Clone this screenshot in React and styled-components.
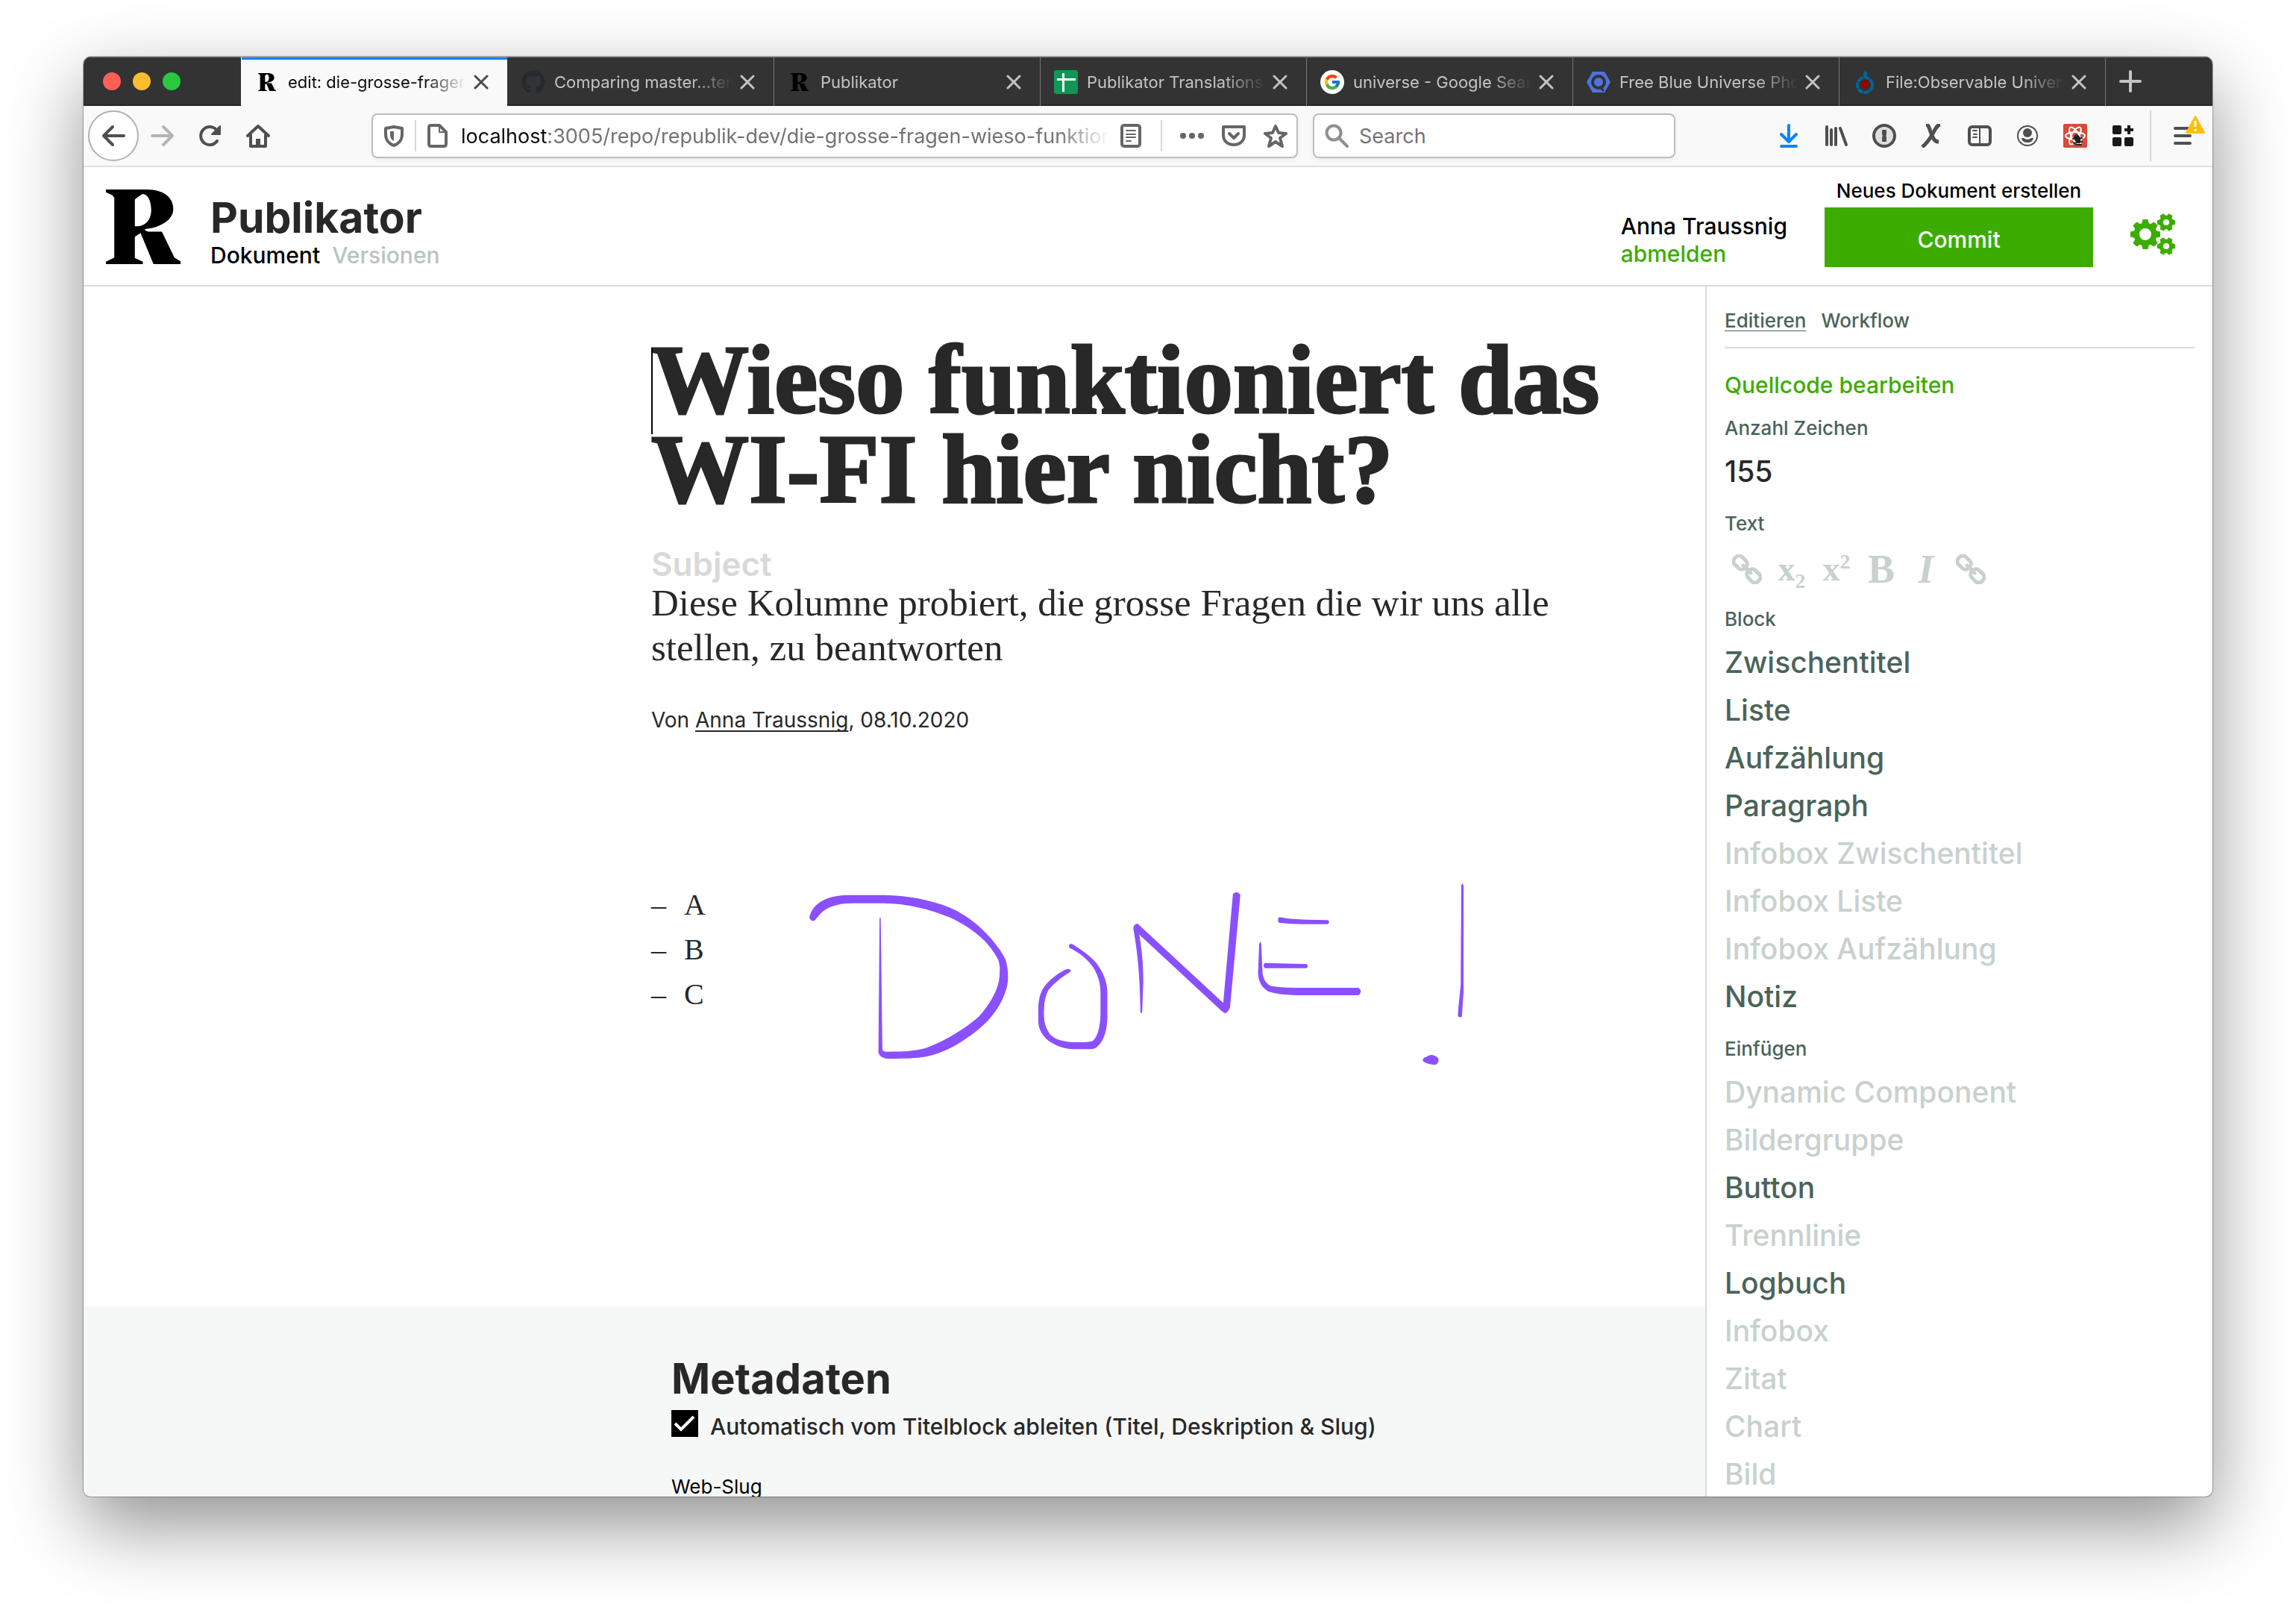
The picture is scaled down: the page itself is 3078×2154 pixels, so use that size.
import React, { useState } from "react";
import styled, { createGlobalStyle, css } from "styled-components";
import { FaGithub } from "react-icons/fa";
import { FcGoogle } from "react-icons/fc";

const sans = `Inter, "Liberation Sans", sans-serif`;
const serif = `"Liberation Serif", serif`;

const color = {
  green: "#3cad00",
  text: "#282828",
  muted: "#4b6359",
  disabled: "#c8d1cd",
  line: "#dadada",
  secondary: "#f6f8f7",
  chromeIcon: "#4f4f50",
  urlIcon: "#666667",
  ink: "#8a50ff",
};

const GlobalStyle = createGlobalStyle`
  *, *::before, *::after { box-sizing: border-box; }
  body { margin: 0; background: #fff; font-family: ${sans}; color: ${color.text}; }
  button { font: inherit; color: inherit; border: 0; padding: 0; background: none; }
  a { color: inherit; text-decoration: none; }
  h1, h2, p, ul { margin: 0; padding: 0; font-weight: inherit; }
  svg { display: block; flex: none; }
`;

const Desktop = styled.div`
  display: flex;
  height: 100vh;
  padding: 76px 112px 148px;
`;

const Window = styled.div`
  flex: 1;
  min-width: 0;
  display: flex;
  flex-direction: column;
  overflow: hidden;
  border-radius: 10px;
  background: #fff;
  box-shadow: 0 0 0 1px rgba(0, 0, 0, 0.28), 0 38px 100px rgba(0, 0, 0, 0.44);
`;

/* ---------- browser chrome ---------- */

const TabStrip = styled.div`
  flex: none;
  display: flex;
  height: 66px;
  background: #333;
  box-shadow: inset 0 1px #7c7c7c, inset 0 -2px #262626;
`;

const TrafficLights = styled.div`
  flex: none;
  width: 211px;
  padding-left: 26px;
  display: flex;
  align-items: center;
  gap: 16px;
`;

const Light = styled.button`
  width: 24px;
  height: 24px;
  border-radius: 50%;
  background: ${(p) => p.$tone};
`;

const Tab = styled.div`
  flex: 0 1 357px;
  min-width: 0;
  display: flex;
  align-items: center;
  padding: 2px 25px 0 18px;
  font-size: 22px;
  line-height: 32px;
  color: #c4c4c4;
  border-left: 1px solid ${(p) => (p.$divided ? "#777" : "transparent")};
  ${(p) =>
    p.$active &&
    css`
      color: #0c0c0d;
      background: #f9f9fa;
      border-left-color: #f9f9fa;
      box-shadow: inset 0 1px #9a9a9a, inset 0 4px #0a84ff;
    `}
`;

const TabTitle = styled.span`
  flex: 1;
  min-width: 0;
  margin: 0 10px 0 12px;
  overflow: hidden;
  white-space: nowrap;
  mask-image: linear-gradient(to left, transparent, #000 56px);
`;

const CloseButton = styled.button`
  color: ${(p) => (p.$active ? "#4a4a4a" : "#c4c4c4")};
`;

const NewTab = styled.button`
  width: 66px;
  display: grid;
  place-items: center;
  color: #c4c4c4;
  border-left: 1px solid #777;
`;

const Toolbar = styled.div`
  flex: none;
  display: flex;
  align-items: center;
  height: 82px;
  padding-left: 6px;
  background: #f9f9fa;
  border-bottom: 2px solid #e0e0e1;
`;

const ToolButton = styled.button`
  position: relative;
  flex: none;
  display: grid;
  place-items: center;
  width: 64px;
  height: 68px;
  color: ${(p) => p.$tone || color.chromeIcon};
`;

const BackButton = styled(ToolButton)`
  width: 68px;
  border: 2px solid #b1b1b1;
  border-radius: 50%;
  background: #fff;
`;

const Spacer = styled.div`
  flex: 0 1 120px;
`;

const Field = styled.div`
  display: flex;
  align-items: center;
  height: 60px;
  border: 2px solid #bdbdbd;
  border-radius: 8px;
  background: #fff;
  color: ${color.urlIcon};
  box-shadow: 0 2px 6px rgba(0, 0, 0, 0.06);
`;

const AddressBar = styled(Field)`
  flex: 1;
  min-width: 0;
  padding: 0 12px;
`;

const Separator = styled.span`
  flex: none;
  width: 2px;
  height: ${(p) => (p.$tall ? 68 : 42)}px;
  margin: 0 ${(p) => p.$gap}px;
  background: #d7d7d8;
`;

const Address = styled.div`
  flex: 1;
  min-width: 0;
  margin: 2px 12px 0 16px;
  overflow: hidden;
  white-space: nowrap;
  font-size: 27px;
  line-height: 40px;
  color: #737373;
  mask-image: linear-gradient(to left, transparent, #000 70px);

  b {
    font-weight: 400;
    color: #0c0c0d;
  }
`;

const PageActions = styled.div`
  display: flex;
  gap: 24px;
`;

const SearchBar = styled(Field)`
  flex: none;
  width: 486px;
  margin-left: 20px;
  padding-left: 14px;
  gap: 14px;

  input {
    flex: 1;
    min-width: 0;
    border: 0;
    outline: 0;
    padding: 2px 0 0;
    background: none;
    font: 27px/40px ${sans};
    color: #0c0c0d;
  }
  input::placeholder {
    color: #737373;
    opacity: 1;
  }
`;

const MenuButton = styled(ToolButton)`
  width: 78px;
`;

const WarningBadge = styled.svg`
  position: absolute;
  left: 42px;
  top: 7px;
`;

/* ---------- app header ---------- */

const Header = styled.header`
  flex: none;
  display: flex;
  align-items: flex-start;
  height: 160px;
  padding: 0 50px 0 30px;
  border-bottom: 2px solid ${color.line};
`;

const Logo = styled.a`
  margin: 30px 40px 0 0;
  color: #000;
`;

const Brand = styled.div`
  flex: 1;
  padding-top: 36px;
`;

const BrandName = styled.p`
  font-size: 57px;
  font-weight: 700;
  line-height: 64px;
`;

const BrandNav = styled.nav`
  display: flex;
  gap: 16px;
  font-size: 30px;
  font-weight: 500;
  line-height: 36px;

  a {
    color: #b8c4c0;
  }
  a[aria-current] {
    color: #000;
  }
`;

const HeaderTools = styled.div`
  display: flex;
  align-items: flex-start;
  gap: 50px;
`;

const User = styled.div`
  padding-top: 61px;
  font-size: 30px;
  font-weight: 500;
  line-height: 37px;
  color: #000;

  a {
    display: block;
    color: ${color.green};
  }
`;

const CommitBox = styled.div`
  display: flex;
  flex-direction: column;
  gap: 6px;
  width: 360px;
  padding-top: 16px;
  font-size: 26px;
  font-weight: 500;
  line-height: 32px;
  text-align: center;
  color: #000;
`;

const CommitButton = styled.button`
  height: 80px;
  padding-top: 6px;
  background: ${color.green};
  color: #fff;
  font-size: 30px;
  font-weight: 500;
`;

const SettingsButton = styled.button`
  padding-top: 62px;
  color: ${color.green};
`;

/* ---------- editor ---------- */

const Body = styled.div`
  flex: 1;
  min-height: 0;
  display: flex;
`;

const Editor = styled.main`
  position: relative;
  flex: 1;
  min-width: 0;
  overflow: hidden;
`;

const Article = styled.article`
  padding: 65px 0 388px 35%;
`;

const Title = styled.h1`
  position: relative;
  max-width: 1340px;
  font: 700 131px/120px ${serif};
  -webkit-text-stroke: 3px ${color.text};
`;

const Caret = styled.span`
  position: absolute;
  left: 0;
  top: 17px;
  width: 2px;
  height: 116px;
  background: #000;
`;

const Subject = styled.p`
  margin-top: 45px;
  font-size: 44px;
  font-weight: 600;
  line-height: 44px;
  color: #d9d9d9;
`;

const Lead = styled.p`
  max-width: 1300px;
  font: 51px/60px ${serif};
`;

const Byline = styled.p`
  margin-top: 47px;
  font-size: 28px;
  line-height: 40px;

  a {
    text-decoration: underline;
    text-decoration-skip-ink: none;
    text-decoration-thickness: 2px;
    text-underline-offset: 4px;
  }
`;

const DashList = styled.ul`
  margin-top: 198px;
  list-style: none;
  font: 40px/60px ${serif};

  li {
    padding-left: 44px;
  }
  li::before {
    content: "–";
    display: inline-block;
    width: 44px;
    margin-left: -44px;
  }
`;

const Handwriting = styled.svg`
  position: absolute;
  left: 748px;
  top: 766px;
  fill: ${color.ink};
`;

const Metadata = styled.section`
  padding: 63px 0 60px 788px;
  background: ${color.secondary};

  h2 {
    font-size: 56px;
    font-weight: 700;
    line-height: 68px;
  }
`;

const CheckRow = styled.label`
  display: grid;
  grid-template-columns: 36px 1fr;
  column-gap: 16px;
  margin-top: 8px;
  font-size: 30px;
  font-weight: 500;
  line-height: 36px;

  input {
    grid-area: 1 / 1;
    appearance: none;
    width: 36px;
    height: 36px;
    margin: 0;
    background: #000;
  }
  svg {
    grid-area: 1 / 1;
    pointer-events: none;
    z-index: 1;
  }
  span {
    padding-top: 4px;
  }
`;

const SlugField = styled.div`
  margin-top: 47px;
  font-size: 26px;
  line-height: 32px;
  color: #000;

  label,
  input {
    display: block;
  }
  input {
    width: 1200px;
    max-width: 100%;
    height: 80px;
    border: 0;
    border-bottom: 2px solid ${color.line};
    background: none;
  }
`;

/* ---------- sidebar ---------- */

const Sidebar = styled.aside`
  flex: none;
  width: 680px;
  padding: 28px 24px 0;
  overflow: hidden;
  border-left: 2px solid ${color.line};
  color: ${color.muted};
`;

const SidebarTabs = styled.nav`
  display: flex;
  gap: 20px;
  padding-bottom: 17px;
  border-bottom: 2px solid ${color.line};
  font-size: 26px;
  font-weight: 500;
  line-height: 36px;

  a[aria-current] {
    text-decoration: underline;
    text-decoration-thickness: 1px;
    text-underline-offset: 4px;
  }
`;

const SourceLink = styled.a`
  display: block;
  margin-top: 31px;
  padding-bottom: 2px;
  font-size: 30px;
  font-weight: 500;
  line-height: 36px;
  color: ${color.green};
`;

const Group = styled.section`
  margin-top: 22px;
`;

const GroupLabel = styled.h2`
  margin-bottom: 10px;
  font-size: 26px;
  font-weight: 500;
  line-height: 32px;
`;

const Count = styled.p`
  font-size: 39px;
  font-weight: 500;
  line-height: 64px;
  color: ${color.text};
`;

const MarkRow = styled.div`
  display: flex;
  height: 64px;
  padding-top: 6px;
`;

const MarkButton = styled.button`
  width: 60px;
  display: grid;
  place-items: center;
  font: 700 ${(p) => p.$size || 46}px/58px ${serif};
  font-style: ${(p) => (p.$italic ? "italic" : "normal")};
  color: ${color.disabled};

  sub,
  sup {
    font-size: 28px;
    line-height: 0;
  }
`;

const BlockButton = styled.button`
  display: block;
  font-size: 39px;
  font-weight: 500;
  line-height: 64px;
  color: ${color.muted};

  &:disabled {
    color: ${color.disabled};
  }
`;

/* ---------- icons ---------- */

const Icon = ({ size = 32, width = 4, children }) => (
  <svg
    width={size}
    height={size}
    viewBox="0 0 32 32"
    fill="none"
    stroke="currentColor"
    strokeWidth={width}
    strokeLinecap="round"
    strokeLinejoin="round"
    aria-hidden="true"
  >
    {children}
  </svg>
);

const RLogo = ({ width, height }) => (
  <svg width={width} height={height} viewBox="82 582 196 299" preserveAspectRatio="none" aria-hidden="true">
    <path
      fill="#000"
      fillRule="evenodd"
      d="M82 582H190C230 582 259 610 259 660C259 705 225 735 184 741C184 747 190 750 198 751H229L262 855L278 870V881H207L173 756L158 772V856L179 871V881H82V871L104 855V616L99 605L82 593ZM158 622V729H168C188 726 201 700 201 665C201 630 193 600 178 600C170 608 162 616 158 622Z"
    />
  </svg>
);

const RFavicon = () => (
  <Favicon>
    <RLogo width={24} height={24} />
  </Favicon>
);

const Favicon = styled.span`
  flex: none;
  display: grid;
  place-items: center;
  width: 32px;
  height: 32px;
  border-radius: 50%;
  background: ${(p) => p.$fill || "none"};
`;

const SheetsIcon = () => (
  <svg width="32" height="32" viewBox="0 0 32 32" aria-hidden="true">
    <rect width="32" height="32" rx="3" fill="#149456" />
    <path d="M12.500 4V29M4 12.500H29" stroke="#fff" strokeWidth="3" />
  </svg>
);

const QwantIcon = () => (
  <svg width="32" height="32" viewBox="0 0 32 32" aria-hidden="true">
    <path d="M8 2H24L32 16L24 30H8L0 16Z" fill="#4f74dd" />
    <circle cx="16" cy="16" r="8" fill="#4f74dd" stroke="#333" strokeWidth="4" />
    <path d="M17 22L23 28" stroke="#333" strokeWidth="3" />
  </svg>
);

const CommonsIcon = () => (
  <svg width="32" height="32" viewBox="0 0 32 32" aria-hidden="true">
    <circle cx="16" cy="20" r="10" fill="none" stroke="#069" strokeWidth="4" strokeDasharray="8 1" />
    <path d="M16 1C21 4 19 7 17 12C13 9 13 5 16 1Z" fill="#069" />
    <circle cx="16" cy="19" r="5" fill="#900" />
    <path d="M8 19H24M16 11V27M11 14L21 24M21 14L11 24" stroke="#900" strokeWidth="1" />
  </svg>
);

const CloseIcon = () => (
  <svg width="20" height="20" viewBox="0 0 20 20" stroke="currentColor" strokeWidth="3" strokeLinecap="round" aria-hidden="true">
    <path d="M2 2L18 18M18 2L2 18" />
  </svg>
);

const Gear = ({ cx, cy, r, hole, teeth, w }) => {
  const body = r * 0.78;
  return (
    <g transform={`translate(${cx} ${cy})`}>
      <circle r={(body + hole) / 2} fill="none" stroke="currentColor" strokeWidth={body - hole} />
      {Array.from({ length: teeth }, (_, i) => (
        <path
          key={i}
          transform={`rotate(${(360 / teeth) * i + (teeth === 6 ? 30 : 0)})`}
          d={`M${-w} ${-body + 2}L${-w * 0.7} ${-r}H${w * 0.7}L${w} ${-body + 2}Z`}
          fill="currentColor"
        />
      ))}
    </g>
  );
};

const GearsIcon = () => (
  <svg width="60" height="56" viewBox="0 0 60 56" aria-hidden="true">
    <Gear cx={20} cy={28} r={20} hole={8} teeth={8} w={5} />
    <Gear cx={48} cy={12} r={12} hole={4} teeth={6} w={4} />
    <Gear cx={48} cy={44} r={12} hole={4} teeth={6} w={4} />
  </svg>
);

const ChainIcon = () => (
  <svg width="40" height="40" viewBox="0 0 40 40" fill="none" stroke="currentColor" strokeWidth="5" strokeLinecap="round" aria-hidden="true">
    <g transform="rotate(45 20 20)">
      <rect x="-2" y="13" width="19" height="14" rx="6" />
      <rect x="23" y="13" width="19" height="14" rx="6" />
      <path d="M13 20H27" />
    </g>
  </svg>
);

/* ---------- data ---------- */

const tabs = [
  { title: "edit: die-grosse-fragen", icon: <RFavicon />, active: true },
  { title: "Comparing master...tern", icon: <FaGithub size={32} color="#24292e" /> },
  { title: "Publikator", icon: <RFavicon />, divided: true },
  { title: "Publikator Translations", icon: <SheetsIcon />, divided: true },
  { title: "universe - Google Search", icon: <Favicon $fill="#fff"><FcGoogle size={24} /></Favicon>, divided: true },
  { title: "Free Blue Universe Photos", icon: <QwantIcon />, divided: true },
  { title: "File:Observable Universe", icon: <CommonsIcon />, divided: true },
];

const blocks = [
  ["Zwischentitel", true],
  ["Liste", true],
  ["Aufzählung", true],
  ["Paragraph", true],
  ["Infobox Zwischentitel", false],
  ["Infobox Liste", false],
  ["Infobox Aufzählung", false],
  ["Notiz", true],
];

const inserts = [
  ["Dynamic Component", false],
  ["Bildergruppe", false],
  ["Button", true],
  ["Trennlinie", false],
  ["Logbuch", true],
  ["Infobox", false],
  ["Zitat", false],
  ["Chart", false],
  ["Bild", false],
];

/* ---------- sections ---------- */

const BrowserTabs = () => (
  <TabStrip>
    <TrafficLights>
      <Light $tone="#ff5f57" aria-label="Close window" />
      <Light $tone="#febc2e" aria-label="Minimize window" />
      <Light $tone="#28c840" aria-label="Zoom window" />
    </TrafficLights>
    {tabs.map((tab) => (
      <Tab key={tab.title} $active={tab.active} $divided={tab.divided}>
        {tab.icon}
        <TabTitle>{tab.title}</TabTitle>
        <CloseButton $active={tab.active} aria-label="Close tab">
          <CloseIcon />
        </CloseButton>
      </Tab>
    ))}
    <NewTab aria-label="New tab">
      <Icon size={32}><path d="M16 3V29M3 16H29" /></Icon>
    </NewTab>
  </TabStrip>
);

const BrowserToolbar = () => (
  <Toolbar>
    <BackButton aria-label="Back">
      <Icon><path d="M30 16H3M15 4L3 16L15 28" /></Icon>
    </BackButton>
    <ToolButton aria-label="Forward" $tone="#b4b4b5">
      <Icon><path d="M2 16H29M17 4L29 16L17 28" /></Icon>
    </ToolButton>
    <ToolButton aria-label="Reload">
      <Icon>
        <path d="M25 23A12 12 0 1 1 24 8" />
        <path d="M29 3V14H18Z" fill="currentColor" strokeWidth="2" />
      </Icon>
    </ToolButton>
    <ToolButton aria-label="Home">
      <Icon>
        <path d="M2 16L16 3L30 16M6 15V30H26V15" />
        <path d="M16 20V28" strokeWidth="6" strokeLinecap="butt" />
      </Icon>
    </ToolButton>
    <Spacer />
    <AddressBar>
      <Icon>
        <path d="M16 4L27 6V14C27 22 22 27 16 29C10 27 5 22 5 14V6Z" />
        <path d="M16 10V23C12 21 11 18 11 14V10Z" fill="currentColor" stroke="none" />
      </Icon>
      <Separator $gap={12} />
      <Icon>
        <path d="M5 5Q5 2 8 2H19L28 11V27Q28 30 25 30H8Q5 30 5 27Z" />
        <path d="M19 3V11H27" strokeWidth="2" />
      </Icon>
      <Address>
        <b>localhost</b>:3005/repo/republik-dev/die-grosse-fragen-wieso-funktioniert
      </Address>
      <Icon>
        <rect x="4" y="2" width="24" height="28" rx="3" />
        <path d="M10 9H22M10 14H22M10 18H22M10 23H16" strokeWidth="2" />
      </Icon>
      <Separator $gap={24} />
      <PageActions>
        <Icon>
          <g fill="currentColor" stroke="none">
            <circle cx="4" cy="16" r="4" />
            <circle cx="16" cy="16" r="4" />
            <circle cx="28" cy="16" r="4" />
          </g>
        </Icon>
        <Icon>
          <path d="M2 4H30V15C30 23 24 28 16 28C8 28 2 23 2 15Z" />
          <path d="M10 13L16 19L22 13" />
        </Icon>
        <Icon>
          <path d="M16 3L20 12L30 13L22 19L25 30L16 24L7 30L10 19L2 13L12 12Z" />
        </Icon>
      </PageActions>
    </AddressBar>
    <SearchBar>
      <Icon><g stroke="#8f8f90"><circle cx="12" cy="12" r="9.500" /><path d="M19 19L30 30" /></g></Icon>
      <input type="search" aria-label="Search" placeholder="Search" />
    </SearchBar>
    <Spacer />
    <ToolButton aria-label="Downloads" $tone="#0a84ff">
      <Icon><path d="M16 2V24M6 14L16 24L26 14M6 30H26" /></Icon>
    </ToolButton>
    <ToolButton aria-label="Library">
      <Icon><path d="M3 4V28M9 8V28M15 6V28M21 6L29 28" /></Icon>
    </ToolButton>
    <ToolButton aria-label="Password manager">
      <Icon>
        <circle cx="16" cy="16" r="14" fill="#dedede" />
        <path d="M14 9H18V14L17 16L18 18V23H14V18L15 16L14 14Z" fill="currentColor" strokeWidth="2" />
      </Icon>
    </ToolButton>
    <ToolButton aria-label="Extension">
      <Icon width={5}><path d="M8 1C12 1 12 6 15 13C18 21 20 24 25 24M27 1C22 2 20 8 16 15C12 22 9 26 3 31" strokeLinecap="butt" /></Icon>
    </ToolButton>
    <ToolButton aria-label="Sidebars">
      <Icon>
        <rect x="2" y="4" width="28" height="24" rx="4" />
        <path d="M16 4V28" strokeWidth="2" />
        <path d="M7 9H12M8 14H12M7 18H12" strokeWidth="2" />
      </Icon>
    </ToolButton>
    <ToolButton aria-label="Account">
      <Icon width={2}>
        <circle cx="16" cy="16" r="13" />
        <g fill="currentColor" stroke="none">
          <circle cx="16" cy="12" r="6" />
          <path d="M8 19H11Q16 23 21 19H24Q23 25 16 25Q9 25 8 19Z" />
        </g>
      </Icon>
    </ToolButton>
    <ToolButton aria-label="React tools">
      <Icon width={2}>
        <rect width="32" height="32" rx="2" fill="#d84b3b" stroke="none" />
        <g stroke="#fff">
          <ellipse cx="16" cy="16" rx="13" ry="5" />
          <ellipse cx="16" cy="16" rx="13" ry="5" transform="rotate(60 16 16)" />
          <ellipse cx="16" cy="16" rx="13" ry="5" transform="rotate(120 16 16)" />
        </g>
        <ellipse cx="19" cy="20" rx="4" ry="6" transform="rotate(-25 19 20)" fill="#222" stroke="none" />
        <path d="M13 20L25 19M14 26L25 24M17 28L24 28" stroke="#222" />
      </Icon>
    </ToolButton>
    <ToolButton aria-label="Add-ons" $tone="#18191a">
      <Icon>
        <g fill="currentColor" stroke="none">
          <rect x="2" y="2" width="12" height="12" rx="2" />
          <rect x="2" y="18" width="12" height="12" rx="2" />
          <rect x="18" y="18" width="12" height="12" rx="2" />
        </g>
        <path d="M24 2V14M18 8H30" strokeLinecap="butt" />
      </Icon>
    </ToolButton>
    <Separator $tall $gap={4} />
    <MenuButton aria-label="Menu">
      <Icon><path d="M5 6H25M5 16H25M5 26H25" /></Icon>
      <WarningBadge width="26" height="24" viewBox="0 0 26 24" aria-hidden="true">
        <path d="M13 1L25 23H1Z" fill="#ffbf00" stroke="#ffbf00" strokeWidth="2" strokeLinejoin="round" />
        <path d="M13 7V15M13 18V21" stroke="#fff" strokeWidth="3" />
      </WarningBadge>
    </MenuButton>
  </Toolbar>
);

const BlockGroup = ({ label, items }) => (
  <Group>
    <GroupLabel>{label}</GroupLabel>
    {items.map(([name, enabled]) => (
      <BlockButton key={name} disabled={!enabled}>
        {name}
      </BlockButton>
    ))}
  </Group>
);

export default function App() {
  const [derive, setDerive] = useState(true);
  return (
    <>
      <GlobalStyle />
      <Desktop>
        <Window>
          <BrowserTabs />
          <BrowserToolbar />
          <Header>
            <Logo href="#" aria-label="Republik">
              <RLogo width={100} height={100} />
            </Logo>
            <Brand>
              <BrandName>Publikator</BrandName>
              <BrandNav>
                <a href="#dokument" aria-current="page">Dokument</a>
                <a href="#versionen">Versionen</a>
              </BrandNav>
            </Brand>
            <HeaderTools>
              <User>
                Anna Traussnig
                <a href="#abmelden">abmelden</a>
              </User>
              <CommitBox>
                Neues Dokument erstellen
                <CommitButton>Commit</CommitButton>
              </CommitBox>
              <SettingsButton aria-label="Einstellungen">
                <GearsIcon />
              </SettingsButton>
            </HeaderTools>
          </Header>
          <Body>
            <Editor>
              <Article>
                <Title>
                  <Caret />
                  Wieso funktioniert das WI-FI hier nicht?
                </Title>
                <Subject>Subject</Subject>
                <Lead>
                  Diese Kolumne probiert, die grosse Fragen die wir uns alle stellen, zu beantworten
                </Lead>
                <Byline>
                  Von <a href="#anna">Anna Traussnig</a>, 08.10.2020
                </Byline>
                <DashList>
                  <li>A</li>
                  <li>B</li>
                  <li>C</li>
                </DashList>
              </Article>
              <Metadata>
                <h2>Metadaten</h2>
                <CheckRow>
                  <input type="checkbox" checked={derive} onChange={() => setDerive(!derive)} />
                  {derive && (
                    <svg width="36" height="36" viewBox="0 0 36 36" fill="none" stroke="#fff" strokeWidth="4" aria-hidden="true">
                      <path d="M5 18L13 26L30 9" />
                    </svg>
                  )}
                  <span>Automatisch vom Titelblock ableiten (Titel, Deskription &amp; Slug)</span>
                </CheckRow>
                <SlugField>
                  <label htmlFor="slug">Web-Slug</label>
                  <input id="slug" type="text" />
                </SlugField>
              </Metadata>
              <Handwriting width="1200" height="320" viewBox="0 0 1568 960" preserveAspectRatio="none" role="img" aria-label="Done!">
                <path d="M294 240C298 190 320 150 362 149H425C470 150 520 175 552 212C595 265 625 350 638 410C643 450 643 490 640 520C632 590 612 650 590 690C560 745 530 785 500 798C480 807 455 807 430 807C420 805 415 790 415 780L417 241H419L422 770Q423 779 430 779C460 779 480 776 497 765C540 730 575 670 590 640C610 590 625 530 627 480C628 450 628 430 625 410C610 345 590 300 550 250C520 215 470 183 425 182H370C340 182 322 200 312 228L304 250Q298 260 294 240Z" />
                <path d="M756 348C775 375 795 410 802 440C812 475 816 510 816 540V640C816 690 810 735 800 755Q795 769 785 769H755C735 768 718 745 710 730C698 700 695 680 695 650V600C696 560 700 530 710 505C720 480 735 455 746 446Q754 447 751 458C735 480 722 505 713 530C706 560 705 590 705 630C705 670 710 690 716 710C727 735 745 741 765 741C780 741 788 741 792 733C802 705 804 660 804 620V540C804 500 798 460 788 430C778 400 765 378 750 362Q746 350 753 345Z" />
                <path d="M869 264L1019 583L1036 145Q1043 130 1049 148L1031 600Q1028 620 1022 625L1016 615L872 308C877 380 879 430 879 500L877 620Q875 627 874 620C873 520 872 420 862 290Q860 268 869 264Z" />
                <path d="M1117 238Q1140 248 1165 248L1202 250Q1207 258 1202 266H1165Q1140 267 1117 261Q1113 250 1117 238Z" />
                <path d="M1092 422L1165 427Q1169 435 1165 443H1092Q1087 433 1092 422Z" />
                <path d="M1084 337Q1086 340 1086 370L1088 465C1090 495 1097 510 1103 515C1120 521 1140 522 1160 522H1256Q1264 537 1256 552H1160C1130 552 1110 546 1098 537C1085 520 1080 490 1080 460L1082 345Z" />
                <path d="M1438 102L1440 110V540L1437 638Q1434 644 1430 636L1431 600L1435 510L1436 110Z" />
                <path d="M1383 792Q1390 792 1396 806V818Q1394 830 1390 832Q1378 830 1370 820Q1366 812 1372 802Q1376 800 1378 795Z" />
              </Handwriting>
            </Editor>
            <Sidebar>
              <SidebarTabs>
                <a href="#editieren" aria-current="page">Editieren</a>
                <a href="#workflow">Workflow</a>
              </SidebarTabs>
              <SourceLink href="#quellcode">Quellcode bearbeiten</SourceLink>
              <Group>
                <GroupLabel>Anzahl Zeichen</GroupLabel>
                <Count>155</Count>
              </Group>
              <Group>
                <GroupLabel>Text</GroupLabel>
                <MarkRow>
                  <MarkButton disabled aria-label="Link"><ChainIcon /></MarkButton>
                  <MarkButton disabled><span>x<sub>2</sub></span></MarkButton>
                  <MarkButton disabled><span>x<sup>2</sup></span></MarkButton>
                  <MarkButton disabled $size={54}>B</MarkButton>
                  <MarkButton disabled $size={54} $italic>I</MarkButton>
                  <MarkButton disabled aria-label="Link"><ChainIcon /></MarkButton>
                </MarkRow>
              </Group>
              <BlockGroup label="Block" items={blocks} />
              <BlockGroup label="Einfügen" items={inserts} />
            </Sidebar>
          </Body>
        </Window>
      </Desktop>
    </>
  );
}
